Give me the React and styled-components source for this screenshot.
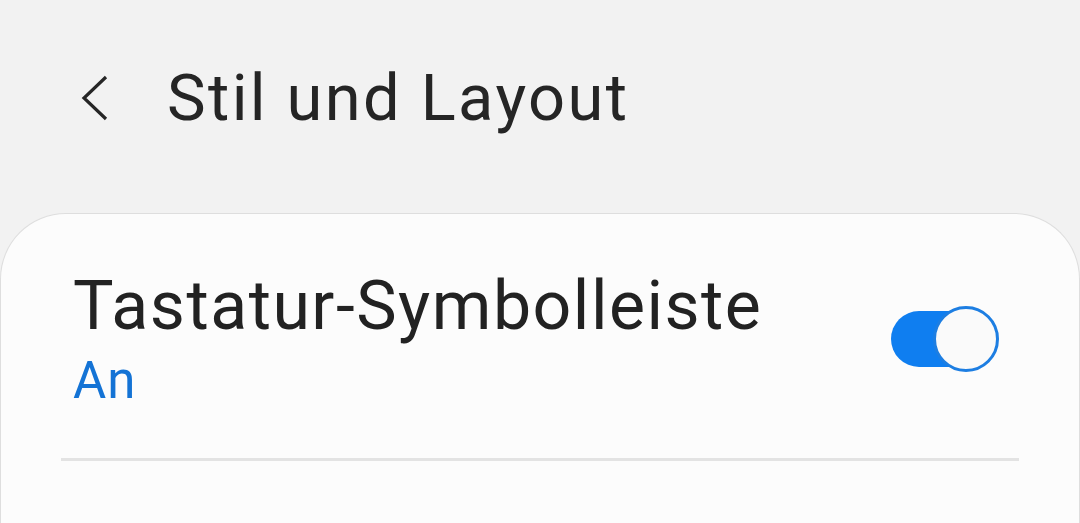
import React from 'react';
import styled, { createGlobalStyle } from 'styled-components';

const GlobalStyle = createGlobalStyle`
  html, body {
    margin: 0;
    padding: 0;
    background: #f2f2f2;
    font-family: Roboto, "Noto Sans", sans-serif;
    overflow: hidden;
  }
`;

const Page = styled.div`
  width: 1080px;
  height: 523px;
  overflow: hidden;
`;

const Header = styled.header`
  display: flex;
  align-items: center;
  height: 195px;
  padding-left: 79px;
  box-sizing: border-box;
`;

const BackButton = styled.button`
  display: flex;
  align-items: center;
  justify-content: center;
  width: 30px;
  height: 50px;
  padding: 0;
  border: none;
  background: none;
`;

const Title = styled.h1`
  margin: 0 0 0 58px;
  font-size: 65px;
  font-weight: 400;
  color: #252525;
  letter-spacing: 2.4px;
`;

const Card = styled.section`
  margin-top: 18px;
  background: #fcfcfc;
  border: 1px solid #dedede;
  border-bottom: none;
  border-radius: 66px 66px 0 0;
  height: 400px;
  box-sizing: border-box;
`;

const Row = styled.div`
  display: flex;
  align-items: center;
  justify-content: space-between;
  padding: 50px 80px 44px 72px;
`;

const Texts = styled.div`
  display: flex;
  flex-direction: column;
`;

const RowTitle = styled.div`
  font-size: 68px;
  line-height: 84px;
  color: #222;
  letter-spacing: 1.5px;
`;

const RowValue = styled.div`
  font-size: 51px;
  line-height: 66px;
  color: #1473d5;
  letter-spacing: 1px;
`;

const Switch = styled.div`
  position: relative;
  width: 108px;
  height: 66px;
`;

const Track = styled.div`
  position: absolute;
  left: 0;
  top: 5px;
  width: 96px;
  height: 56px;
  border-radius: 28px;
  background: #0f7ef0;
`;

const Thumb = styled.div`
  position: absolute;
  right: 0;
  top: 0;
  width: 66px;
  height: 66px;
  box-sizing: border-box;
  border-radius: 50%;
  border: 3px solid #1d7ee2;
  background: #fafafa;
`;

const Divider = styled.hr`
  margin: 0 60px;
  border: none;
  height: 3px;
  background: #e3e3e3;
`;

export default function App() {
  return (
    <Page>
      <GlobalStyle />
      <Header>
        <BackButton aria-label="Zurück">
          <svg width="30" height="50" viewBox="0 0 30 50">
            <path d="M27 4 L5 25 L27 46" fill="none" stroke="#262626" strokeWidth="3.2" />
          </svg>
        </BackButton>
        <Title>Stil und Layout</Title>
      </Header>
      <Card>
        <Row>
          <Texts>
            <RowTitle>Tastatur-Symbolleiste</RowTitle>
            <RowValue>An</RowValue>
          </Texts>
          <Switch>
            <Track />
            <Thumb />
          </Switch>
        </Row>
        <Divider />
      </Card>
    </Page>
  );
}
